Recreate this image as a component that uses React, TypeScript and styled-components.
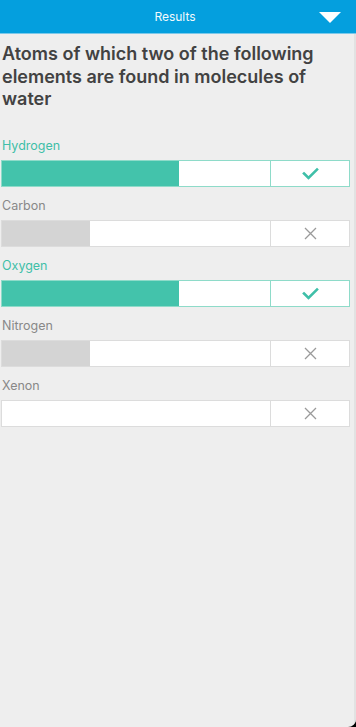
import React from "react";
import styled, { createGlobalStyle } from "styled-components";

type Answer = {
  name: string;
  correct: boolean;
  percent: number;
};

const answers: Answer[] = [
  { name: "Hydrogen", correct: true, percent: 66 },
  { name: "Carbon", correct: false, percent: 33 },
  { name: "Oxygen", correct: true, percent: 66 },
  { name: "Nitrogen", correct: false, percent: 33 },
  { name: "Xenon", correct: false, percent: 0 },
];

const CheckIcon = () => (
  <svg width="17" height="13" viewBox="0 0 17 13">
    <path
      d="M2 6.5 L6.5 11 L15 2.5"
      fill="none"
      stroke="#3fbfa8"
      strokeWidth="2.6"
      strokeLinecap="square"
    />
  </svg>
);

const CrossIcon = () => (
  <svg width="13" height="13" viewBox="0 0 13 13">
    <path
      d="M1 1 L12 12 M12 1 L1 12"
      fill="none"
      stroke="#9a9a9a"
      strokeWidth="1.3"
    />
  </svg>
);

const App: React.FC = () => {
  return (
    <>
      <GlobalStyle />
      <Screen>
        <Header>
          <HeaderTitle>Results</HeaderTitle>
          <Caret />
        </Header>
        <Body>
          <Question>
            Atoms of which two of the following elements are found in
            molecules of water
          </Question>
          <AnswerList>
            {answers.map((answer) => (
              <AnswerRow key={answer.name}>
                <AnswerLabel correct={answer.correct}>{answer.name}</AnswerLabel>
                <Bar correct={answer.correct}>
                  <Track>
                    {answer.percent > 0 && (
                      <Fill
                        correct={answer.correct}
                        style={{ width: `${answer.percent}%` }}
                      />
                    )}
                  </Track>
                  <Mark correct={answer.correct}>
                    {answer.correct ? <CheckIcon /> : <CrossIcon />}
                  </Mark>
                </Bar>
              </AnswerRow>
            ))}
          </AnswerList>
        </Body>
      </Screen>
    </>
  );
};

export default App;

const GlobalStyle = createGlobalStyle`
  html, body {
    margin: 0;
    padding: 0;
    background: #000;
  }
  body {
    font-family: Inter, Roboto, "Liberation Sans", sans-serif;
  }
`;

const Screen = styled.div`
  display: flex;
  flex-direction: column;
  width: 356px;
  height: 727px;
  background: #eeeeee;
  border-bottom-right-radius: 8px;
  overflow: hidden;
`;

const Header = styled.div`
  position: relative;
  display: flex;
  align-items: center;
  justify-content: center;
  height: 34px;
  background: #049fde;
  border-bottom: 1px solid #7cc9ea;
  box-sizing: border-box;
`;

const HeaderTitle = styled.div`
  color: #ffffff;
  font-size: 12px;
  margin-right: 6px;
  opacity: 0.95;
`;

const Caret = styled.div`
  position: absolute;
  right: 15px;
  top: 12px;
  width: 0;
  height: 0;
  border-left: 11px solid transparent;
  border-right: 11px solid transparent;
  border-top: 11px solid #ffffff;
`;

const Body = styled.div`
  flex: 1;
  display: flex;
  flex-direction: column;
  padding: 9px 4px 0 1px;
  border-right: 2px solid #e2e2e2;
`;

const Question = styled.div`
  margin: 0 0 0 1px;
  color: #424242;
  font-size: 18px;
  font-weight: 600;
  line-height: 22.5px;
`;

const AnswerList = styled.div`
  display: flex;
  flex-direction: column;
  margin-top: 28px;
`;

const AnswerRow = styled.div`
  display: flex;
  flex-direction: column;
  gap: 7px;
  margin-bottom: 12px;
`;

const AnswerLabel = styled.div<{ correct: boolean }>`
  padding-left: 1px;
  height: 14px;
  line-height: 14px;
  font-size: 12.5px;
  color: ${(props) => (props.correct ? "#3fbfa8" : "#888888")};
`;

const Bar = styled.div<{ correct: boolean }>`
  display: grid;
  grid-template-columns: 1fr 79px;
  height: 27px;
  box-sizing: border-box;
  background: #ffffff;
  border: 1px solid ${(props) => (props.correct ? "#8edbc9" : "#dcdcdc")};
`;

const Track = styled.div`
  display: flex;
  height: 100%;
`;

const Fill = styled.div<{ correct: boolean }>`
  height: 100%;
  background: ${(props) => (props.correct ? "#43c3ab" : "#d4d4d4")};
`;

const Mark = styled.div<{ correct: boolean }>`
  display: flex;
  align-items: center;
  justify-content: center;
  border-left: 1px solid ${(props) => (props.correct ? "#8edbc9" : "#dcdcdc")};
`;
